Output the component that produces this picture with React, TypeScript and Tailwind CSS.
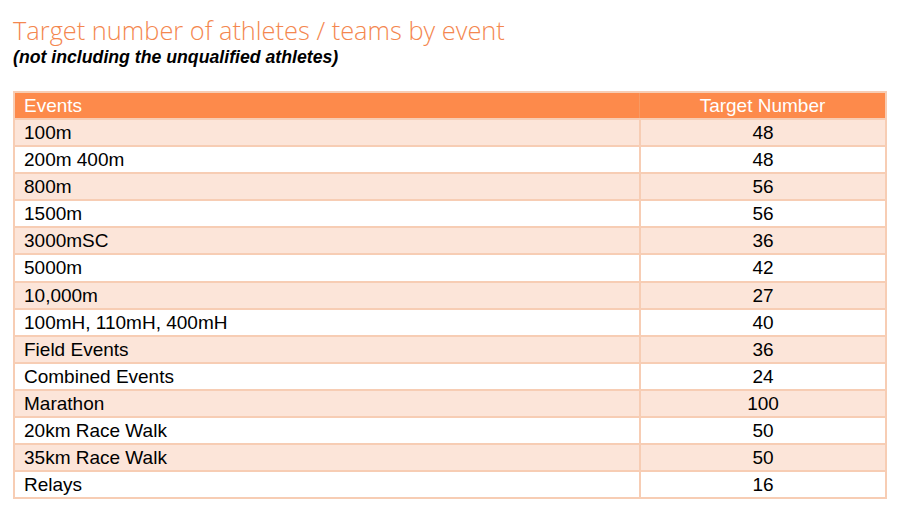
const ROWS = [
  { event: "100m", target: "48" },
  { event: "200m 400m", target: "48" },
  { event: "800m", target: "56" },
  { event: "1500m", target: "56" },
  { event: "3000mSC", target: "36" },
  { event: "5000m", target: "42" },
  { event: "10,000m", target: "27" },
  { event: "100mH, 110mH, 400mH", target: "40" },
  { event: "Field Events", target: "36" },
  { event: "Combined Events", target: "24" },
  { event: "Marathon", target: "100" },
  { event: "20km Race Walk", target: "50" },
  { event: "35km Race Walk", target: "50" },
  { event: "Relays", target: "16" },
];

export default function App() {
  return (
    <div className="h-[509px] w-[900px] bg-white pl-[13px] pt-[15px] font-['Liberation_Sans',Arial,sans-serif] text-black">
      <h1 className="font-['Open_Sans',sans-serif] text-[25.4px] font-light leading-[31px] text-[#f4874f]">
        Target number of athletes / teams by event
      </h1>
      <p className="text-[17.7px] font-bold italic leading-[22px]">
        (not including the unqualified athletes)
      </p>

      <div className="mt-[23px] w-[874px] border-2 border-[#f7cdb4]">
        <div className="grid h-[25px] grid-cols-[624px_1fr] bg-[#fd8a4b] text-[19px] leading-[25px] text-white">
          <div className="pl-[9px]">Events</div>
          <div className="border-l border-[#f79a63] text-center">Target Number</div>
        </div>
        {ROWS.map((row, i) => (
          <div
            key={row.event}
            className={`grid h-[27.1px] grid-cols-[624px_1fr] border-t-2 border-[#f7cdb4] text-[19px] leading-[25px] ${
              i % 2 === 0 ? "bg-[#fce5d9]" : "bg-white"
            }`}
          >
            <div className="pl-[9px]">{row.event}</div>
            <div className="border-l-2 border-[#f7cdb4] text-center">{row.target}</div>
          </div>
        ))}
      </div>
    </div>
  );
}
